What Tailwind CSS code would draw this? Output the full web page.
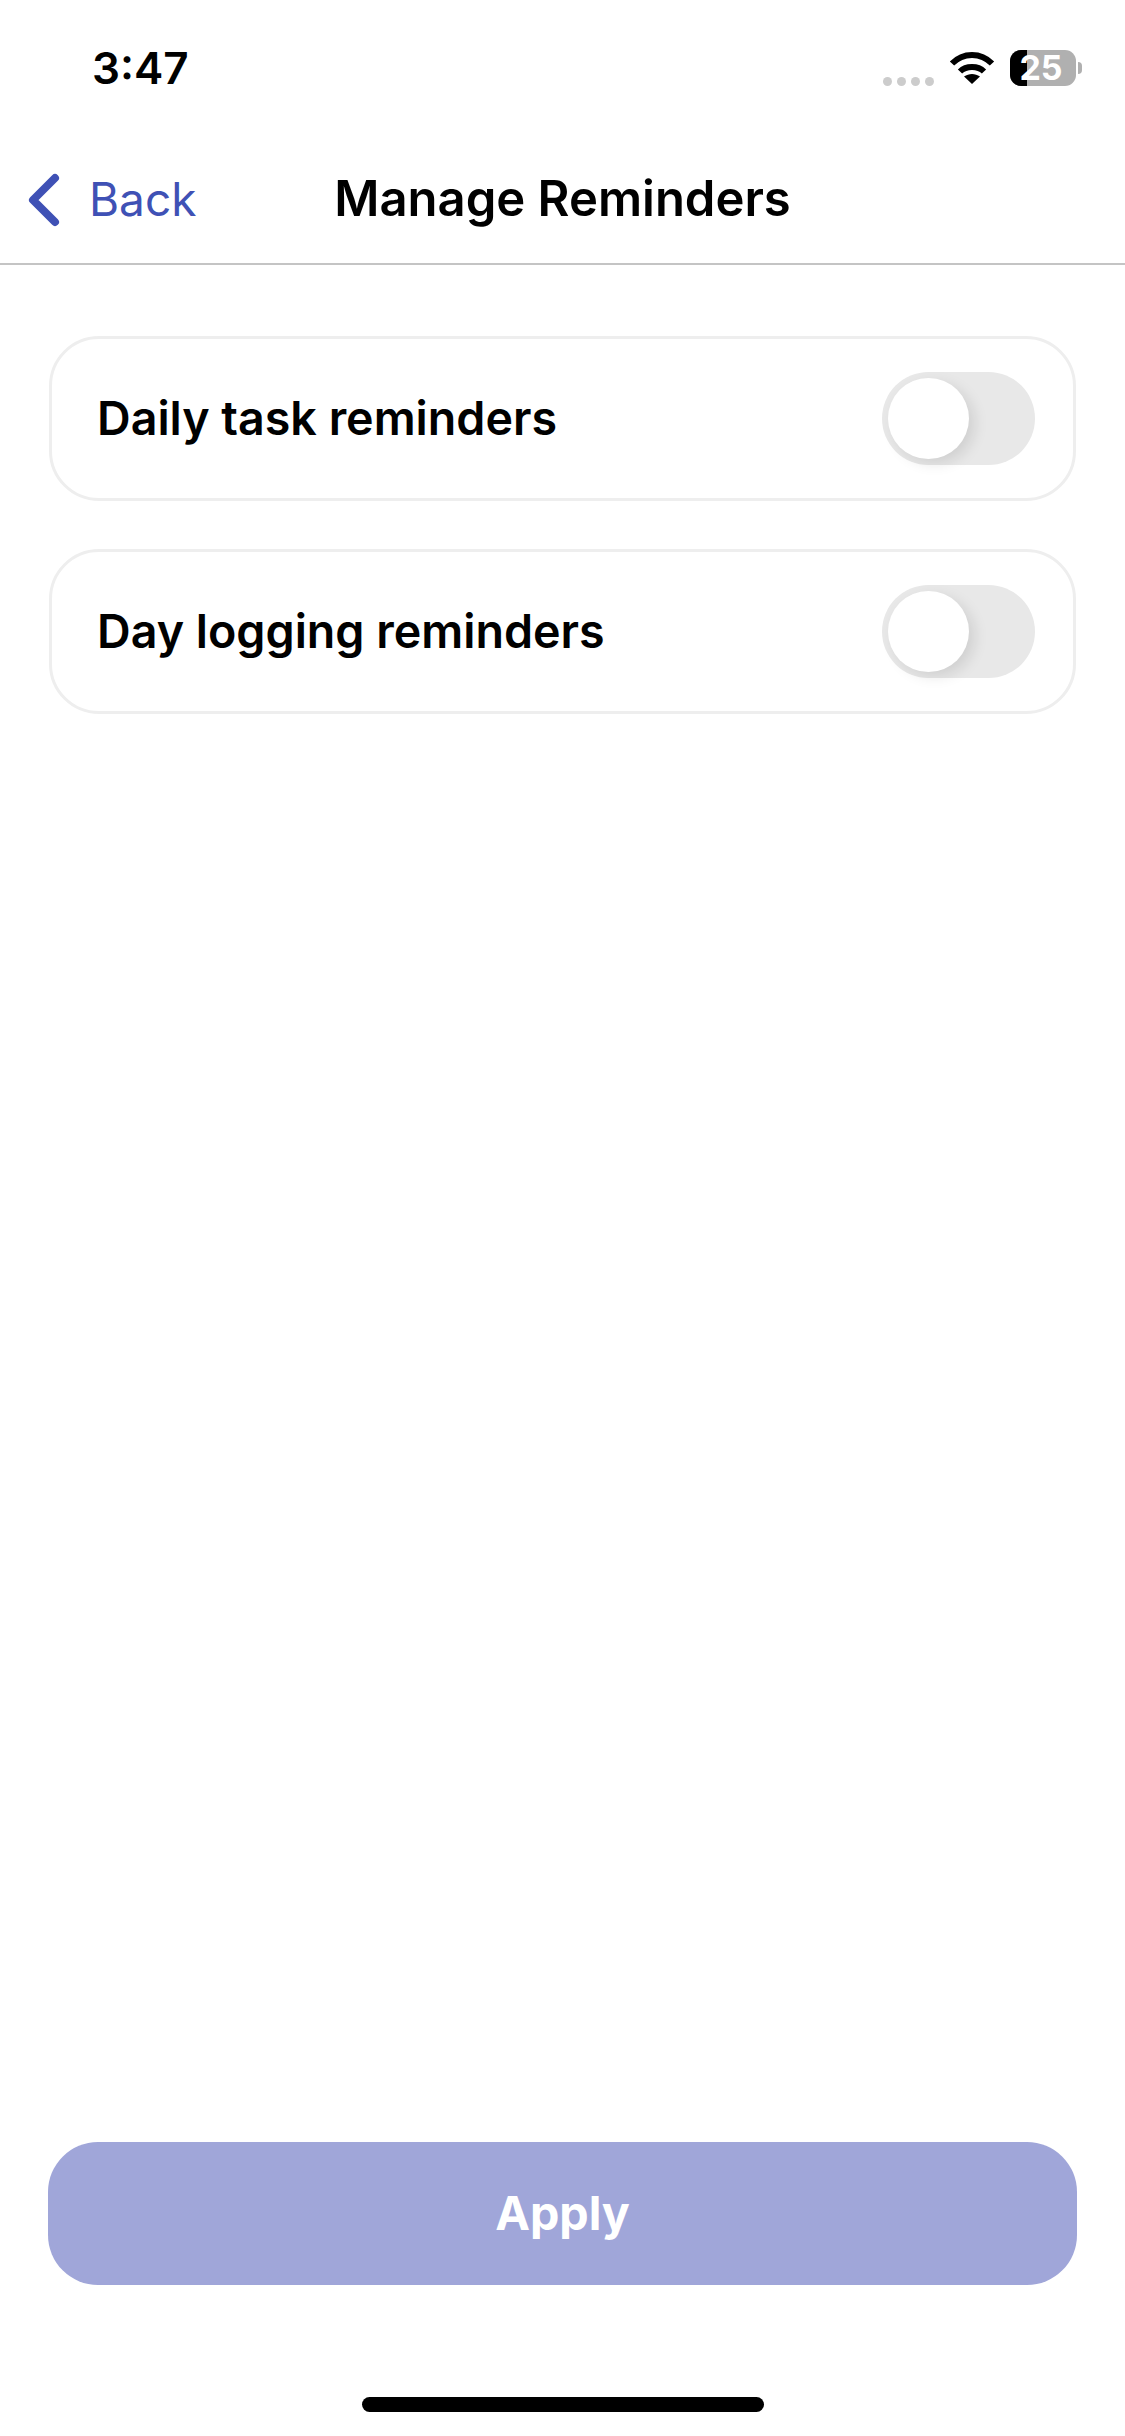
<!DOCTYPE html>
<html lang="en">
<head>
  <meta charset="UTF-8" />
  <meta name="viewport" content="width=device-width, initial-scale=1.0"/>
  <title>Manage Reminders</title>
  <script src="https://cdn.jsdelivr.net/npm/@tailwindcss/browser@4"></script>
</head>
<body class="bg-white h-[2436px] w-[1125px] flex flex-col font-['Inter',sans-serif] text-black overflow-hidden">
  <!-- status bar -->
  <div class="h-[136px] flex items-center justify-between pl-[92px] pr-[43px] shrink-0">
    <span class="text-[44px] leading-none font-semibold">3:47</span>
    <div class="flex items-center">
      <div class="flex gap-[5px] mt-[26px] mr-[15px]">
        <span class="size-[9px] rounded-full bg-[#cccccc]"></span>
        <span class="size-[9px] rounded-full bg-[#cccccc]"></span>
        <span class="size-[9px] rounded-full bg-[#cccccc]"></span>
        <span class="size-[9px] rounded-full bg-[#cccccc]"></span>
      </div>
      <svg class="w-[46px] h-[34px] mr-[15px]" viewBox="0 0 46 34" fill="none" stroke="#000" stroke-width="6">
        <path d="M3 12.5 C14 1 32 1 43 12.5" />
        <path d="M11 20.5 C17 14.5 29 14.5 35 20.5" />
        <path d="M23 33 L15 25.5 C20 22 26 22 31 25.5 Z" fill="#000" stroke="none" />
      </svg>
      <div class="relative flex items-center">
        <div class="relative w-[66px] h-[36px] rounded-[11px] bg-[#b0b0b0] overflow-hidden">
          <div class="h-full w-[17px] bg-black"></div>
        </div>
        <span class="absolute left-[-2px] w-[66px] text-center text-white text-[34px] leading-none font-bold">25</span>
        <span class="ml-[2px] w-[4px] h-[12px] rounded-r-full bg-[#b0b0b0]"></span>
      </div>
    </div>
  </div>

  <!-- nav -->
  <div class="h-[129px] shrink-0 border-b-2 border-[#c4c4c4] grid grid-cols-[1fr_auto_1fr] items-center">
    <div class="flex items-center pl-[28px]">
      <svg class="w-[32px] h-[54px] mr-[29px]" viewBox="0 0 32 54" fill="none" stroke="#3f51b5" stroke-width="8" stroke-linecap="round" stroke-linejoin="round">
        <path d="M27 5 L5 27 L27 49" />
      </svg>
      <span class="text-[46px] leading-none text-[#3f51b5] -mt-[2px]">Back</span>
    </div>
    <h1 class="text-[49px] leading-none font-semibold -mt-[2px]">Manage Reminders</h1>
    <div></div>
  </div>

  <!-- reminders -->
  <main class="flex-1 flex flex-col gap-[48px] px-[49px] pt-[71px]">
    <div class="h-[165px] rounded-[50px] border-[3px] border-[#eeeeee] flex items-center justify-between pl-[45px] pr-[38px]">
      <span class="text-[46.6px] leading-none font-semibold">Daily task reminders</span>
      <div class="w-[153px] h-[93px] rounded-full bg-[#e8e8e8] p-[6px]">
        <div class="size-[81px] rounded-full bg-white shadow-[6px_5px_14px_rgba(0,0,0,0.10)]"></div>
      </div>
    </div>
    <div class="h-[165px] rounded-[50px] border-[3px] border-[#eeeeee] flex items-center justify-between pl-[45px] pr-[38px]">
      <span class="text-[46.6px] leading-none font-semibold">Day logging reminders</span>
      <div class="w-[153px] h-[93px] rounded-full bg-[#e8e8e8] p-[6px]">
        <div class="size-[81px] rounded-full bg-white shadow-[6px_5px_14px_rgba(0,0,0,0.10)]"></div>
      </div>
    </div>
  </main>

  <!-- apply -->
  <div class="px-[48px] shrink-0">
    <button class="w-full h-[143px] rounded-[50px] bg-[#a0a6d9] text-white text-[46.6px] font-bold">Apply</button>
  </div>
  <div class="shrink-0 flex justify-center pt-[112px] pb-[24px]">
    <div class="w-[402px] h-[15px] rounded-full bg-black"></div>
  </div>
</body>
</html>
